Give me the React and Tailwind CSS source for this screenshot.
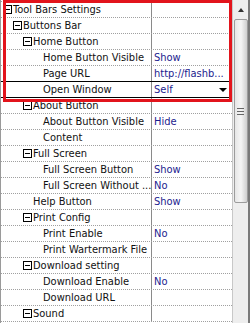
const rows = [
  { name: "Tool Bars Settings", level: 0, box: true },
  { name: "Buttons Bar", level: 1, box: true },
  { name: "Home Button", level: 2, box: true },
  { name: "Home Button Visible", level: 3, value: "Show" },
  { name: "Page URL", level: 3, value: "http://flashb..." },
  { name: "Open Window", level: 3, value: "Self", selected: true },
  { name: "About Button", level: 2, box: true },
  { name: "About Button Visible", level: 3, value: "Hide" },
  { name: "Content", level: 3 },
  { name: "Full Screen", level: 2, box: true },
  { name: "Full Screen Button", level: 3, value: "Show" },
  { name: "Full Screen Without ...", level: 3, value: "No" },
  { name: "Help Button", level: 2, value: "Show" },
  { name: "Print Config", level: 2, box: true },
  { name: "Print Enable", level: 3, value: "No" },
  { name: "Print Wartermark File", level: 3 },
  { name: "Download setting", level: 2, box: true },
  { name: "Download Enable", level: 3, value: "No" },
  { name: "Download URL", level: 3 },
  { name: "Sound", level: 2, box: true },
];

const indent = ["pl-[2px]", "pl-[12px]", "pl-[22px]", "pl-[32px]"];

function MinusBox() {
  return (
    <span className="w-[9px] h-[9px] shrink-0 border border-black bg-white flex items-center justify-center">
      <span className="w-[5px] h-[1px] bg-black" />
    </span>
  );
}

function Row({ row, nextSelected }) {
  const line = row.selected || nextSelected ? "border-solid border-black" : "border-dotted border-[#a0a0a0]";
  return (
    <div className={`h-[16px] flex border-b ${line} relative`}>
      {row.selected && <span className="absolute left-[2px] top-[-1px] h-[17px] w-[1px] bg-black" />}
      <div className={`w-[150px] shrink-0 flex items-center overflow-hidden whitespace-nowrap ${indent[row.level]}`}>
        {row.box ? <MinusBox /> : <span className="w-[9px] shrink-0" />}
        <span className="ml-[1px] text-[#111]">{row.name}</span>
      </div>
      <div className="flex-1 border-l border-solid border-[#8a8a8a] flex items-center pl-[2px] relative overflow-hidden whitespace-nowrap">
        <span className="text-[#1c1c8e]">{row.value}</span>
        {row.selected && (
          <span className="absolute right-[3px] top-[1px] w-[13px] h-[13px] bg-white flex items-center justify-center">
            <span className="w-0 h-0 border-l-[4px] border-r-[4px] border-t-[4px] border-l-transparent border-r-transparent border-t-black" />
          </span>
        )}
      </div>
    </div>
  );
}

export default function App() {
  return (
    <div
      className="w-[250px] h-[323px] overflow-hidden relative flex bg-white text-[11px] leading-none"
      style={{ fontFamily: '"DejaVu Sans Condensed", "DejaVu Sans", sans-serif', fontStretch: "condensed" }}
    >
      <div className="w-[232px] shrink-0 border-l border-[#9a9a9a] pt-[1px]">
        <div className="border-t border-dotted border-[#a0a0a0]">
          {rows.map((r, i) => (
            <Row key={r.name} row={r} nextSelected={rows[i + 1]?.selected} />
          ))}
        </div>
      </div>

      <div className="w-[18px] shrink-0 bg-[#eeeeee] border-l border-[#c8c8c8] border-r-2 border-r-[#7a7a7a] flex flex-col items-center">
        <div className="h-[19px] flex items-center justify-center">
          <span className="w-0 h-0 border-l-[3px] border-r-[3px] border-b-[4px] border-l-transparent border-r-transparent border-b-[#333]" />
        </div>
        <div className="w-[14px] h-[184px] rounded-[2px] border border-[#9c9c9c] bg-gradient-to-r from-[#e6e6e6] via-[#f6f6f6] to-[#cfcfcf] flex items-center justify-center">
          <div className="flex flex-col gap-[2px]">
            <span className="w-[7px] h-[1px] bg-[#666]" />
            <span className="w-[7px] h-[1px] bg-[#666]" />
            <span className="w-[7px] h-[1px] bg-[#666]" />
          </div>
        </div>
      </div>

      <div className="absolute left-[3px] top-0 w-[229px] h-[102px] border-[3px] border-[#e2141c] pointer-events-none" />
    </div>
  );
}
